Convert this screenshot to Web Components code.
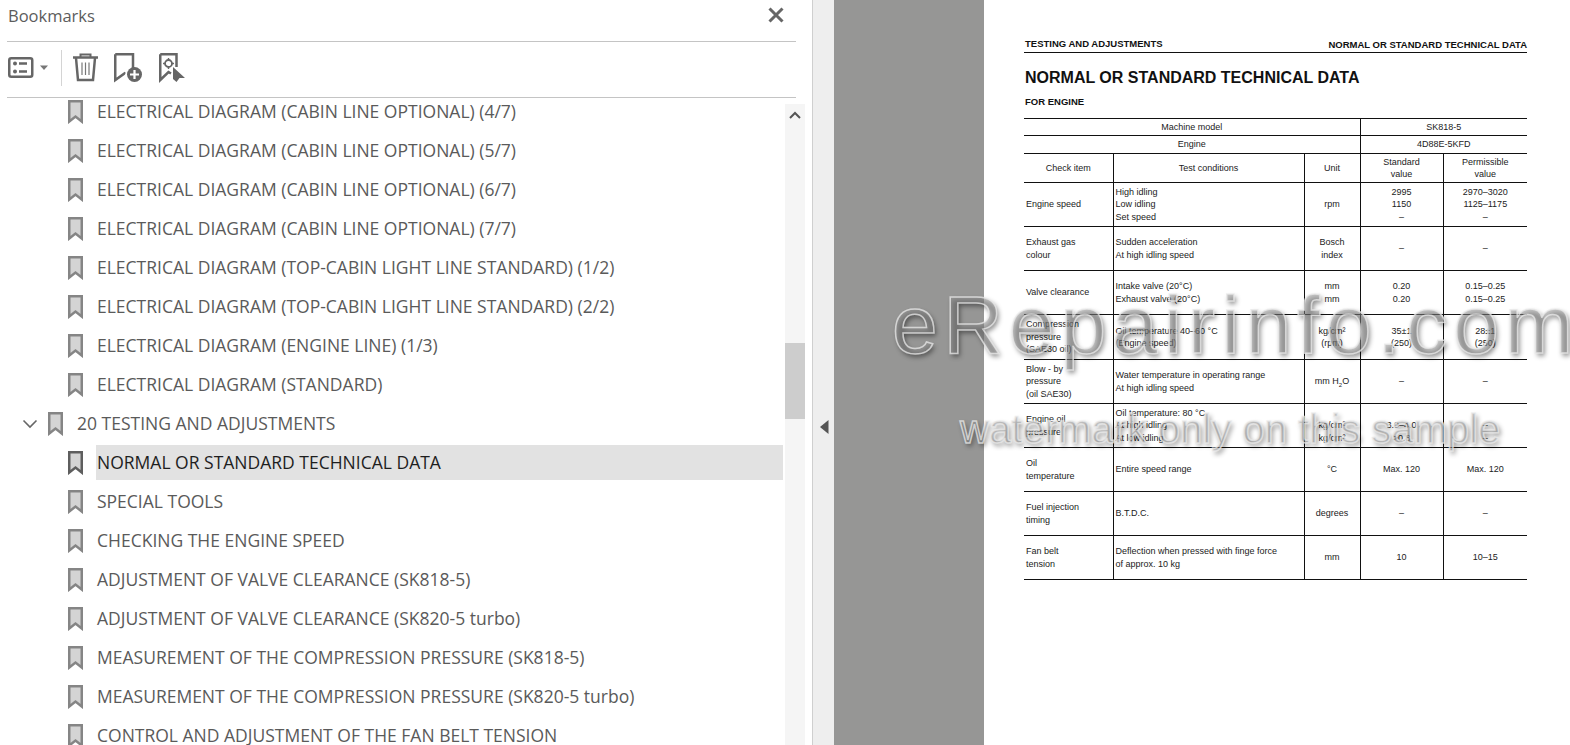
<!DOCTYPE html>
<html>
<head>
<meta charset="utf-8">
<style>
html, body { margin: 0; padding: 0; height: 100%; overflow: hidden; background: #fff; }
body { font-family: "Open Sans", "Liberation Sans", sans-serif; }
</style>
</head>
<body>
<pdf-viewer>
    <bookmarks-panel slot="side">
        <bookmark-row>ELECTRICAL DIAGRAM (CABIN LINE OPTIONAL) (4/7)</bookmark-row>
        <bookmark-row>ELECTRICAL DIAGRAM (CABIN LINE OPTIONAL) (5/7)</bookmark-row>
        <bookmark-row>ELECTRICAL DIAGRAM (CABIN LINE OPTIONAL) (6/7)</bookmark-row>
        <bookmark-row>ELECTRICAL DIAGRAM (CABIN LINE OPTIONAL) (7/7)</bookmark-row>
        <bookmark-row>ELECTRICAL DIAGRAM (TOP-CABIN LIGHT LINE STANDARD) (1/2)</bookmark-row>
        <bookmark-row>ELECTRICAL DIAGRAM (TOP-CABIN LIGHT LINE STANDARD) (2/2)</bookmark-row>
        <bookmark-row>ELECTRICAL DIAGRAM (ENGINE LINE) (1/3)</bookmark-row>
        <bookmark-row>ELECTRICAL DIAGRAM (STANDARD)</bookmark-row>
        <bookmark-row parent>20 TESTING AND ADJUSTMENTS</bookmark-row>
        <bookmark-row selected>NORMAL OR STANDARD TECHNICAL DATA</bookmark-row>
        <bookmark-row>SPECIAL TOOLS</bookmark-row>
        <bookmark-row>CHECKING THE ENGINE SPEED</bookmark-row>
        <bookmark-row>ADJUSTMENT OF VALVE CLEARANCE (SK818-5)</bookmark-row>
        <bookmark-row>ADJUSTMENT OF VALVE CLEARANCE (SK820-5 turbo)</bookmark-row>
        <bookmark-row>MEASUREMENT OF THE COMPRESSION PRESSURE (SK818-5)</bookmark-row>
        <bookmark-row>MEASUREMENT OF THE COMPRESSION PRESSURE (SK820-5 turbo)</bookmark-row>
        <bookmark-row>CONTROL AND ADJUSTMENT OF THE FAN BELT TENSION</bookmark-row>
    </bookmarks-panel>
    <doc-page slot="doc"></doc-page>
</pdf-viewer>

<script>
"use strict"
class PdfViewer extends HTMLElement{
    constructor(){
        super();
        this.attachShadow({mode: "open"});
        this.shadowRoot.innerHTML = `
        <style>
        :host{ display: flex; width: 1570px; height: 745px; overflow: hidden; position: relative; }
        .side{ flex: 0 0 812px; background: #fff; }
        .gutter{ flex: 0 0 22px; box-sizing: border-box; border-left: 1px solid #cfcfcf; background: #eeeeee; padding: 100px 0 0 7px; padding-top: 420px; }
        .gutter svg{ display: block; }
        .gray{ flex: 0 0 150px; background: #969695; }
        .doc{ flex: 1; background: #fff; min-width: 0; }
        .mark{ position: absolute; left: 0; top: 0; right: 0; bottom: 0; pointer-events: none; font-family: "Liberation Sans", Arial, sans-serif; white-space: nowrap; }
        .mark span{ position: absolute; color: rgba(146,146,146,.5); -webkit-text-stroke: 1.5px rgba(235,235,235,.75); text-shadow: 2px 3px 5px rgba(0,0,0,.45); }
        .big{ left: 892px; top: 278px; font-size: 82px; letter-spacing: 6px; line-height: 94px; }
        .small{ left: 960px; top: 406px; font-size: 40px; line-height: 46px; }
        </style>
        <div class="side"><slot name="side"></slot></div>
        <div class="gutter"><svg width="9" height="14" viewBox="0 0 9 14"><path d="M8.500 0V14L0 7Z" fill="#555"/></svg></div>
        <div class="gray"></div>
        <div class="doc"><slot name="doc"></slot></div>
        <div class="mark"><span class="big">eRepairinfo.com</span><span class="small">watermark only on this sample</span></div>
        `;
    }
}

class BookmarksPanel extends HTMLElement{
    constructor(){
        super();
        this.attachShadow({mode: "open"});
        this.shadowRoot.innerHTML = `
        <style>
        :host{ display: flex; flex-direction: column; height: 745px; color: #555; }
        .title{ height: 41px; margin: 0 16px 0 7px; border-bottom: 1px solid #c4c4c4; display: flex; justify-content: space-between; }
        .title span{ font-size: 16.500px; line-height: 32px; margin-left: 1px; color: #5c5c5c; }
        .title svg{ margin: 6px 11px 0 0; }
        .tools{ height: 55px; margin: 0 16px 0 7px; border-bottom: 1px solid #c4c4c4; display: flex; align-items: flex-start; padding-top: 10px; box-sizing: content-box; height: 45px; }
        .tools svg{ display: block; }
        .sep{ width: 1px; height: 36px; background: #d4d4d4; margin: -2px 10px 0 11px; }
        .body{ flex: 1; display: flex; min-height: 0; }
        .list{ flex: 0 0 783px; overflow: hidden; }
        .inner{ margin-top: -4px; }
        .bar{ flex: 0 0 20px; margin: 6px 0 0 2px; background: #f5f5f5; }
        .up{ height: 24px; display: flex; justify-content: center; padding-top: 7px; box-sizing: border-box; }
        .thumb{ height: 76px; margin-top: 215px; background: #cdcdcd; }
        </style>
        <div class="title">
            <span>Bookmarks</span>
            <svg width="18" height="18" viewBox="0 0 18 18"><path d="M2.500 2.500L15.500 15.500M15.500 2.500L2.500 15.500" stroke="#666" stroke-width="3" fill="none"/></svg>
        </div>
        <div class="tools">
            <svg width="42" height="31" viewBox="0 0 42 31" style="margin-left:1px">
                <rect x="1.250" y="6.250" width="23" height="18.500" rx="2" fill="none" stroke="#666" stroke-width="2.500"/>
                <circle cx="7" cy="11.500" r="2" fill="#666"/><circle cx="7" cy="19.500" r="2" fill="#666"/>
                <path d="M11 11.500H19M11 19.500H19" stroke="#666" stroke-width="2.500"/>
                <path d="M32 13.500H40L36 18Z" fill="#777"/>
            </svg>
            <div class="sep"></div>
            <svg width="27" height="31" viewBox="0 0 27 31" style="margin-right:14px">
                <path d="M1 5.500H26" stroke="#666" stroke-width="2.500"/>
                <path d="M8.500 5V2.500H18.500V5" fill="none" stroke="#666" stroke-width="2"/>
                <path d="M4 6L6 28H21L23 6" fill="none" stroke="#666" stroke-width="2.500"/>
                <path d="M10 10.500V23M13.500 10.500V23M17 10.500V23" stroke="#777" stroke-width="1.200"/>
            </svg>
            <svg width="30" height="31" viewBox="0 0 30 31" style="margin-right:15px">
                <path d="M2.250 2.250H20V17M12 22L11.500 21.500L2.250 28V2.250" fill="none" stroke="#666" stroke-width="2.500"/>
                <circle cx="21.500" cy="22.500" r="7.500" fill="#666"/>
                <path d="M21.500 18V27M17 22.500H26" stroke="#fff" stroke-width="2.200"/>
            </svg>
            <svg width="28" height="31" viewBox="0 0 28 31">
                <path d="M2.250 2.250H18.500V15M13 21.500L10.500 20L2.250 28V2.250" fill="none" stroke="#666" stroke-width="2.500"/>
                <circle cx="10.500" cy="11.500" r="3.500" fill="none" stroke="#666" stroke-width="1.800"/>
                <path d="M10.500 6V8.500M10.500 14.500V17M5 11.500H7.500M13.500 11.500H16" stroke="#666" stroke-width="1.400"/>
                <path d="M15 15L27 26L21.500 26L18.500 30L15 27Z" fill="#666"/>
            </svg>
        </div>
        <div class="body">
            <div class="list"><div class="inner"><slot></slot></div></div>
            <div class="bar">
                <div class="up"><svg width="12" height="8" viewBox="0 0 12 8"><path d="M1 7L6 2L11 7" fill="none" stroke="#555" stroke-width="2"/></svg></div>
                <div class="thumb"></div>
            </div>
        </div>
        `;
    }
}

class BookmarkRow extends HTMLElement{
    constructor(){
        super();
        this.attachShadow({mode: "open"});
    }

    connectedCallback(){
        const chevron = this.hasAttribute('parent')
            ? `<svg class="chev" width="16" height="10" viewBox="0 0 16 10"><path d="M1.500 1.500L8 8L14.500 1.500" fill="none" stroke="#666" stroke-width="1.600"/></svg>`
            : '';
        this.shadowRoot.innerHTML = `
        <style>
        :host{ display: flex; align-items: center; height: 35px; margin-bottom: 4px; padding-left: 68px; color: #5a5a5a; font-size: 17.500px; }
        :host([parent]){ padding-left: 22px; }
        :host([selected]){ color: #1e1e1e; }
        .chev{ margin-right: 10px; }
        .icon{ flex: none; margin-right: 13px; display: block; }
        .label{ flex: 1; height: 35px; line-height: 34px; padding-left: 1px; white-space: nowrap; }
        :host([selected]) .label{ background: #e2e2e2; }
        </style>
        ${chevron}
        <svg class="icon" width="15" height="24" viewBox="0 0 15 24">
            <path d="M1.250 1.250H13.750V21.500L7.500 16.500L1.250 21.500Z" fill="#d4d4d4" stroke="${this.hasAttribute('selected') ? '#5e5e5e' : '#858585'}" stroke-width="2.500"/>
        </svg>
        <div class="label"><slot></slot></div>
        `;
    }
}

class DocPage extends HTMLElement{
    constructor(){
        super();
        this.attachShadow({mode: "open"});
        this.shadowRoot.innerHTML = `
        <style>
        :host{ display: block; padding: 0 43px 0 40px; color: #111; font-family: "Liberation Sans", Arial, sans-serif; }
        .head{ height: 52px; box-sizing: border-box; border-bottom: 1px solid #111; display: flex; justify-content: space-between; align-items: flex-end; font-weight: bold; font-size: 9.500px; line-height: 12px; padding: 0 0 1px 1px; height: 53px; }
        .head span:first-child{ margin-bottom: 1px; }
        h1{ margin: 16px 0 0 1px; font-size: 16px; line-height: 18px; }
        h2{ margin: 9px 0 10px 1px; font-size: 9.500px; line-height: 12px; }
        </style>
        <div class="head"><span>TESTING AND ADJUSTMENTS</span><span>NORMAL OR STANDARD TECHNICAL DATA</span></div>
        <h1>NORMAL OR STANDARD TECHNICAL DATA</h1>
        <h2>FOR ENGINE</h2>
        <spec-table></spec-table>
        `;
    }
}

class SpecTable extends HTMLElement{
    constructor(){
        super();
        this.attachShadow({mode: "open"});
    }

    connectedCallback(){
        const rows = [
            [44, 'Exhaust gas<br>colour', 'Sudden acceleration<br>At high idling speed', 'Bosch<br>index', '–', '–'],
            [44, 'Valve clearance', 'Intake valve (20°C)<br>Exhaust valve (20°C)', 'mm<br>mm', '0.20<br>0.20', '0.15–0.25<br>0.15–0.25'],
            [45, 'Compression<br>pressure<br>(SAE30 oil)', 'Oil temperature 40–60 °C<br>(Engine speed)', 'kg/cm²<br>(rpm)', '35±1<br>(250)', '28±1<br>(250)'],
            [44, 'Blow - by<br>pressure<br>(oil SAE30)', 'Water temperature in operating range<br>At high idling speed', 'mm H<sub>2</sub>O', '–', '–'],
            [44, 'Engine oil<br>pressure', 'Oil temperature: 80 °C<br>At high idling<br>At low idling', '<br>kg/cm²<br>kg/cm²', '<br>3.0–4.0<br>&gt;0.8', '<br>–<br>–'],
            [44, 'Oil<br>temperature', 'Entire speed range', '°C', 'Max. 120', 'Max. 120'],
            [44, 'Fuel injection<br>timing', 'B.T.D.C.', 'degrees', '–', '–'],
            [44, 'Fan belt<br>tension', 'Deflection when pressed with finge force<br>of approx. 10 kg', 'mm', '10', '10–15'],
        ];
        const body = rows.map(r => `
            <tr style="height:${r[0]}px"><td>${r[1]}</td><td>${r[2]}</td><td class="c">${r[3]}</td><td class="c">${r[4]}</td><td class="c">${r[5]}</td></tr>`).join('');
        this.shadowRoot.innerHTML = `
        <style>
        :host{ display: block; }
        table{ border-collapse: collapse; table-layout: fixed; width: 503px; font-size: 9px; line-height: 12.500px; color: #222; }
        td{ border: 1px solid #111; padding: 0 0 0 2px; vertical-align: middle; overflow: hidden; white-space: nowrap; }
        tr td:first-child{ border-left: 0; }
        tr td:last-child{ border-right: 0; }
        .c{ text-align: center; padding: 0; }
        sub{ font-size: 6px; line-height: 0; }
        </style>
        <table>
            <colgroup><col style="width:89px"><col style="width:191px"><col style="width:56px"><col style="width:83px"><col style="width:84px"></colgroup>
            <tr style="height:17px"><td class="c" colspan="3">Machine model</td><td class="c" colspan="2">SK818-5</td></tr>
            <tr style="height:18px"><td class="c" colspan="3">Engine</td><td class="c" colspan="2">4D88E-5KFD</td></tr>
            <tr style="height:29px"><td class="c">Check item</td><td class="c">Test conditions</td><td class="c">Unit</td><td class="c">Standard<br>value</td><td class="c">Permissible<br>value</td></tr>
            <tr style="height:44px"><td>Engine speed</td><td>High idling<br>Low idling<br>Set speed</td><td class="c">rpm</td><td class="c">2995<br>1150<br>–</td><td class="c">2970–3020<br>1125–1175<br>–</td></tr>
            ${body}
        </table>
        `;
    }
}

customElements.define('pdf-viewer', PdfViewer);
customElements.define('bookmarks-panel', BookmarksPanel);
customElements.define('bookmark-row', BookmarkRow);
customElements.define('doc-page', DocPage);
customElements.define('spec-table', SpecTable);
</script>
</body>
</html>
